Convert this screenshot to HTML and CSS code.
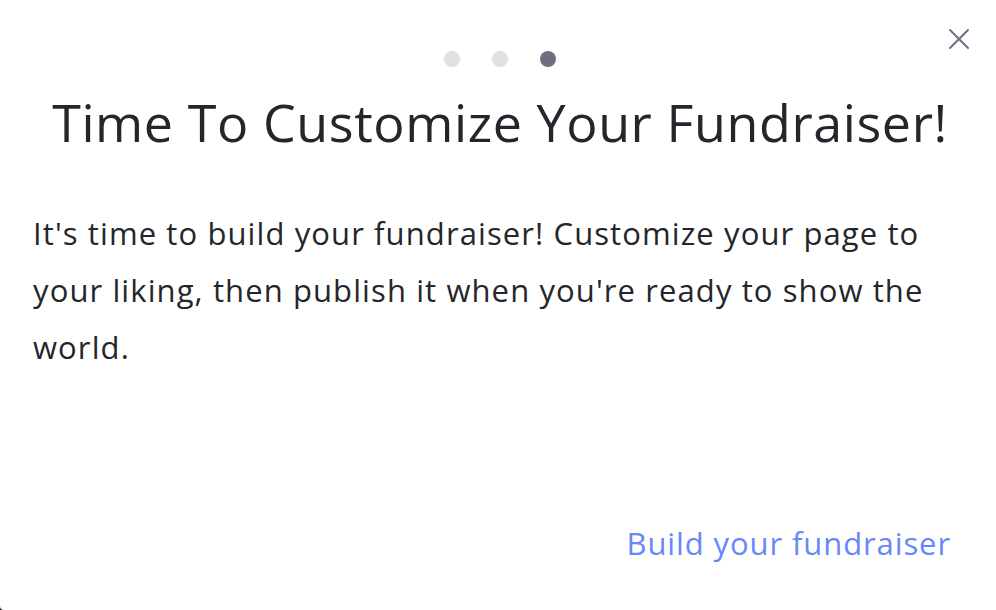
FILE: index.html
```html
<!DOCTYPE html>
<html lang="en">
<head>
    <meta charset="UTF-8">
    <meta name="viewport" content="width=device-width, initial-scale=1.0">
    <title>Customize Your Fundraiser</title>
    <link rel="stylesheet" href="styles.css">
</head>
<body>
    <div class="modal">
        <button class="close" aria-label="Close">
            <svg width="22" height="22" viewBox="0 0 22 22">
                <path d="M2 2 L20 20 M20 2 L2 20" stroke="#6f7080" stroke-width="2" stroke-linecap="round"/>
            </svg>
        </button>

        <div class="steps">
            <span class="dot"></span>
            <span class="dot"></span>
            <span class="dot active"></span>
        </div>

        <h1 class="title">Time To Customize Your Fundraiser!</h1>

        <p class="text">It's time to build your fundraiser! Customize your page to your liking, then publish it when you're ready to show the world.</p>

        <div class="actions">
            <a href="#" class="link">Build your fundraiser</a>
        </div>
    </div>
</body>
</html>
```

FILE: styles.css
```css
html, body {
    margin: 0;
    padding: 0;
    background-color: #1c1c20;
}

body {
    font-family: "Open Sans", sans-serif;
    color: #25262b;
}

.modal {
    position: relative;
    box-sizing: border-box;
    width: 996px;
    height: 610px;
    background-color: #fff;
    border-bottom-left-radius: 4px;
    padding: 51px 29px 0 33px;
    display: flex;
    flex-direction: column;
}

.close {
    position: absolute;
    top: 28px;
    right: 26px;
    width: 22px;
    height: 22px;
    padding: 0;
    border: none;
    background: none;
    cursor: pointer;
}

.close svg {
    display: block;
}

.steps {
    display: flex;
    justify-content: center;
    gap: 32px;
}

.dot {
    width: 16px;
    height: 16px;
    border-radius: 50%;
    background-color: #e1e1e5;
}

.dot.active {
    background-color: #6e6f7e;
}

.title {
    margin: 23px 0 0 0;
    text-align: center;
    font-size: 52px;
    font-weight: 400;
    line-height: 64px;
    letter-spacing: 0.6px;
}

.text {
    margin: 51px 0 0 0;
    font-size: 31px;
    line-height: 57px;
    letter-spacing: 1.1px;
}

.actions {
    margin-top: auto;
    margin-bottom: 47px;
    display: flex;
    justify-content: flex-end;
    padding-right: 16px;
}

.link {
    color: #6788f9;
    text-decoration: none;
    font-size: 31px;
    line-height: 40px;
    letter-spacing: 0.9px;
}
```
